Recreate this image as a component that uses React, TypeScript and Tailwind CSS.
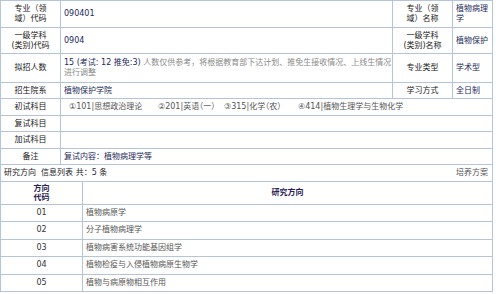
import React from "react";

const B = "border border-[#b3c5d8]";
const lab = `${B} text-center text-[#222] px-[4px] align-middle whitespace-nowrap`;
const val = `${B} text-left text-[#1c2a58] pl-[3px] pr-[3px] align-middle`;

export default function App() {
  const rows = [
    ["01", "植物病原学"],
    ["02", "分子植物病理学"],
    ["03", "植物病害系统功能基因组学"],
    ["04", "植物检疫与入侵植物病原生物学"],
    ["05", "植物与病原物相互作用"],
  ];
  return (
    <div
      className="w-[500px] h-[294px] overflow-hidden bg-white text-[8px] leading-[10px]"
      style={{ fontFamily: '"DejaVu Sans", "Noto Sans CJK SC", sans-serif' }}
    >
      <table className="table-fixed border-collapse w-[492px]">
        <colgroup>
          <col className="w-[60px]" />
          <col className="w-[332px]" />
          <col className="w-[60px]" />
          <col className="w-[40px]" />
        </colgroup>
        <tbody>
          <tr className="h-[27px]">
            <td className={lab}>
              专业（领
              <br />
              域）代码
            </td>
            <td className={val}>090401</td>
            <td className={lab}>
              专业（领
              <br />
              域）名称
            </td>
            <td className={val}>植物病理学</td>
          </tr>
          <tr className="h-[26px]">
            <td className={lab}>
              一级学科
              <br />
              (类别)代码
            </td>
            <td className={val}>0904</td>
            <td className={lab}>
              一级学科
              <br />
              (类别)名称
            </td>
            <td className={val}>植物保护</td>
          </tr>
          <tr className="h-[29px]">
            <td className={lab}>拟招人数</td>
            <td className={val}>
              <div className="whitespace-nowrap">
                <span>15 (考试: 12 推免:3) </span>
                <span className="text-[#8a8a8a]">
                  人数仅供参考，将根据教育部下达计划、推免生接收情况、上线生情况
                </span>
              </div>
              <div className="text-[#8a8a8a]">进行调整</div>
            </td>
            <td className={lab}>专业类型</td>
            <td className={val}>学术型</td>
          </tr>
          <tr className="h-[16px]">
            <td className={lab}>招生院系</td>
            <td className={val}>植物保护学院</td>
            <td className={lab}>学习方式</td>
            <td className={val}>全日制</td>
          </tr>
          <tr className="h-[17px]">
            <td className={lab}>初试科目</td>
            <td className={val} colSpan={3}>
              <div className="flex pl-[5px] text-[#555] whitespace-nowrap [font-feature-settings:'halt']">
                <span className="w-[89px] shrink-0">①101|思想政治理论</span>
                <span className="w-[66px] shrink-0">②201|英语（一）</span>
                <span className="w-[74px] shrink-0">③315|化学（农）</span>
                <span>④414|植物生理学与生物化学</span>
              </div>
            </td>
          </tr>
          <tr className="h-[16px]">
            <td className={lab}>复试科目</td>
            <td className={val} colSpan={3}></td>
          </tr>
          <tr className="h-[17px]">
            <td className={lab}>加试科目</td>
            <td className={val} colSpan={3}></td>
          </tr>
          <tr className="h-[16px]">
            <td className={lab}>备注</td>
            <td className={val} colSpan={3}>
              复试内容：植物病理学等
            </td>
          </tr>
          <tr className="h-[17px]">
            <td className={`${B} px-[3px] text-[#222]`} colSpan={4}>
              <div className="flex justify-between items-center">
                <span>
                  研究方向&nbsp;&nbsp;信息列表 共：<span className="text-[#1c2a58]">5</span> 条
                </span>
                <span className="text-[#555] pr-[1px]">培养方案</span>
              </div>
            </td>
          </tr>
        </tbody>
      </table>
      <table className="table-fixed border-collapse w-[492px]">
        <colgroup>
          <col className="w-[82px]" />
          <col className="w-[410px]" />
        </colgroup>
        <tbody>
          <tr className="h-[22px]">
            <td className={`${B} border-t-0 text-center font-bold text-[#2a1c55] leading-[9px]`}>
              方向
              <br />
              代码
            </td>
            <td className={`${B} border-t-0 text-center font-bold text-[#2a1c55]`}>研究方向</td>
          </tr>
          {rows.map(([c, n]) => (
            <tr key={c} className="h-[17.5px]">
              <td className={`${B} text-center text-[#333]`}>{c}</td>
              <td className={`${B} pl-[3px] text-[#555]`}>{n}</td>
            </tr>
          ))}
        </tbody>
      </table>
    </div>
  );
}
